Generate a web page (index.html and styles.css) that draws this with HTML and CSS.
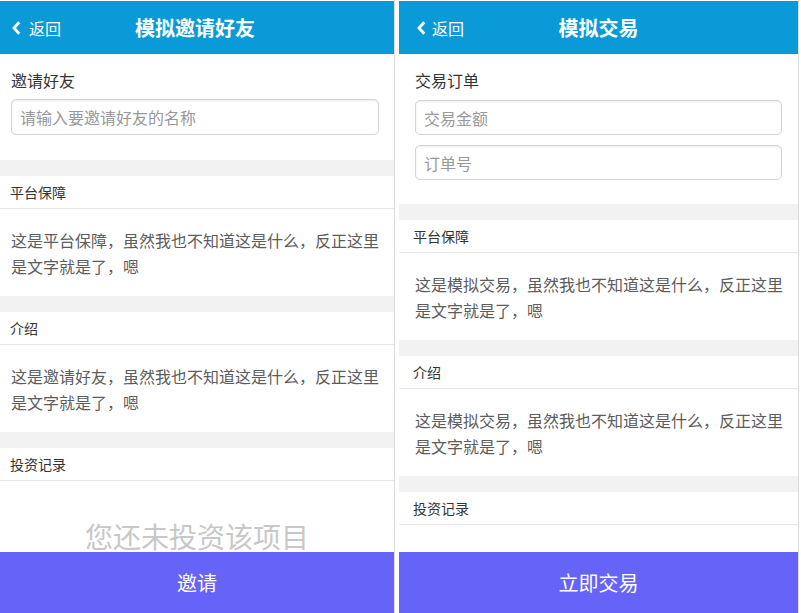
FILE: index.html
```html
<!DOCTYPE html>
<html lang="zh-CN">
<head>
<meta charset="utf-8">
<title>模拟邀请好友 / 模拟交易</title>
<link rel="stylesheet" href="styles.css">
</head>
<body>
<div class="screens">
  <section class="phone phone--invite">
    <header class="bar">
      <a class="back" href="#">
        <svg class="back-icon" viewBox="0 0 9 14" width="9" height="14" aria-hidden="true"><path d="M7.2 1.2 L2 7 L7.2 12.8" fill="none" stroke="#fff" stroke-width="2.8" stroke-linejoin="miter"/></svg>
        <span>返回</span>
      </a>
      <h1 class="title">模拟邀请好友</h1>
    </header>
    <div class="main">
      <div class="form">
        <div class="label">邀请好友</div>
        <input class="field" type="text" placeholder="请输入要邀请好友的名称">
      </div>
      <div class="sep"></div>
      <div class="sec-head">平台保障</div>
      <div class="sec-body">这是平台保障，虽然我也不知道这是什么，反正这里是文字就是了，嗯</div>
      <div class="sep"></div>
      <div class="sec-head">介绍</div>
      <div class="sec-body">这是邀请好友，虽然我也不知道这是什么，反正这里是文字就是了，嗯</div>
      <div class="sep"></div>
      <div class="sec-head">投资记录</div>
      <div class="empty">您还未投资该项目</div>
    </div>
    <button class="cta" type="button">邀请</button>
  </section>

  <section class="phone phone--trade">
    <header class="bar">
      <a class="back" href="#">
        <svg class="back-icon" viewBox="0 0 9 14" width="9" height="14" aria-hidden="true"><path d="M7.2 1.2 L2 7 L7.2 12.8" fill="none" stroke="#fff" stroke-width="2.8" stroke-linejoin="miter"/></svg>
        <span>返回</span>
      </a>
      <h1 class="title">模拟交易</h1>
    </header>
    <div class="main">
      <div class="form">
        <div class="label">交易订单</div>
        <input class="field" type="text" placeholder="交易金额">
        <input class="field" type="text" placeholder="订单号">
      </div>
      <div class="sep"></div>
      <div class="sec-head">平台保障</div>
      <div class="sec-body">这是模拟交易，虽然我也不知道这是什么，反正这里是文字就是了，嗯</div>
      <div class="sep"></div>
      <div class="sec-head">介绍</div>
      <div class="sec-body">这是模拟交易，虽然我也不知道这是什么，反正这里是文字就是了，嗯</div>
      <div class="sep"></div>
      <div class="sec-head">投资记录</div>
    </div>
    <button class="cta" type="button">立即交易</button>
  </section>
</div>
</body>
</html>
```

FILE: styles.css
```css
* { box-sizing: border-box; }

html, body {
  margin: 0;
  padding: 0;
  background: #fff;
}

body {
  font-family: "Noto Sans CJK SC", "Noto Sans", "Liberation Sans", sans-serif;
  color: #333;
}

.screens {
  display: flex;
  gap: 4px;
  height: 613px;
}

.phone {
  display: flex;
  flex-direction: column;
  height: 613px;
  padding-top: 1px;
  border-right: 1px solid #dcdcdc;
  background: #fff;
}

.phone--invite { width: 395px; }
.phone--trade { width: 400px; }

/* header bar */
.bar {
  flex: none;
  height: 53px;
  background: #0a9ad7;
  display: grid;
  grid-template-columns: 1fr auto 1fr;
  align-items: center;
  color: #fff;
}

.phone--invite .bar { padding-left: 12px; }
.phone--trade .bar { padding-left: 18px; }

.back {
  display: flex;
  align-items: center;
  color: #fff;
  text-decoration: none;
  font-size: 16px;
  line-height: 20px;
  justify-self: start;
}

.back-icon {
  display: block;
  margin-right: 8px;
  margin-top: 1px;
}

.phone--trade .back-icon { margin-right: 6px; }

.title {
  margin: 0;
  font-size: 20px;
  line-height: 28px;
  font-weight: 700;
  color: #fff;
}

.phone--invite .title { margin-left: -16px; }
.phone--trade .title { margin-left: -18px; }

/* main scroll area */
.main {
  flex: 1;
  overflow: hidden;
}

.form {
  padding: 14px 15px 25px 11px;
  display: flex;
  flex-direction: column;
}

.phone--trade .form {
  padding: 14px 16px 24px 16px;
}

.label {
  font-size: 16px;
  line-height: 24px;
  color: #333;
}

.field {
  display: block;
  width: 100%;
  height: 36px;
  margin: 7px 0 0;
  padding: 0 8px;
  border: 1px solid #d4d4d4;
  border-radius: 5px;
  box-shadow: inset 0 1px 2px rgba(0, 0, 0, 0.08);
  font-family: inherit;
  font-size: 16px;
  color: #333;
  background: #fff;
  outline: none;
}

.phone--trade .field { height: 35px; margin-top: 8px; }
.phone--trade .field + .field { margin-top: 10px; }

.field::placeholder { color: #999; }

.sep {
  height: 16px;
  background: #f2f2f2;
}

.sec-head {
  height: 33px;
  line-height: 32px;
  padding-left: 10px;
  font-size: 14px;
  color: #333;
  border-bottom: 1px solid #e6e6e6;
}

.phone--trade .sec-head { padding-left: 14px; }

.sec-body {
  padding: 18px 11px 17px;
  font-size: 16px;
  line-height: 26px;
  color: #5c5c5c;
}

.phone--trade .sec-body { padding: 18px 14px 17px 16px; }

.empty {
  margin-top: 35px;
  text-align: center;
  font-size: 28px;
  line-height: 40px;
  color: #c8c8c8;
}

.cta {
  flex: none;
  height: 61px;
  width: 100%;
  border: 0;
  margin: 0;
  padding: 0;
  background: #6563f8;
  color: #fff;
  font-family: inherit;
  font-size: 20px;
  line-height: 28px;
}
```
